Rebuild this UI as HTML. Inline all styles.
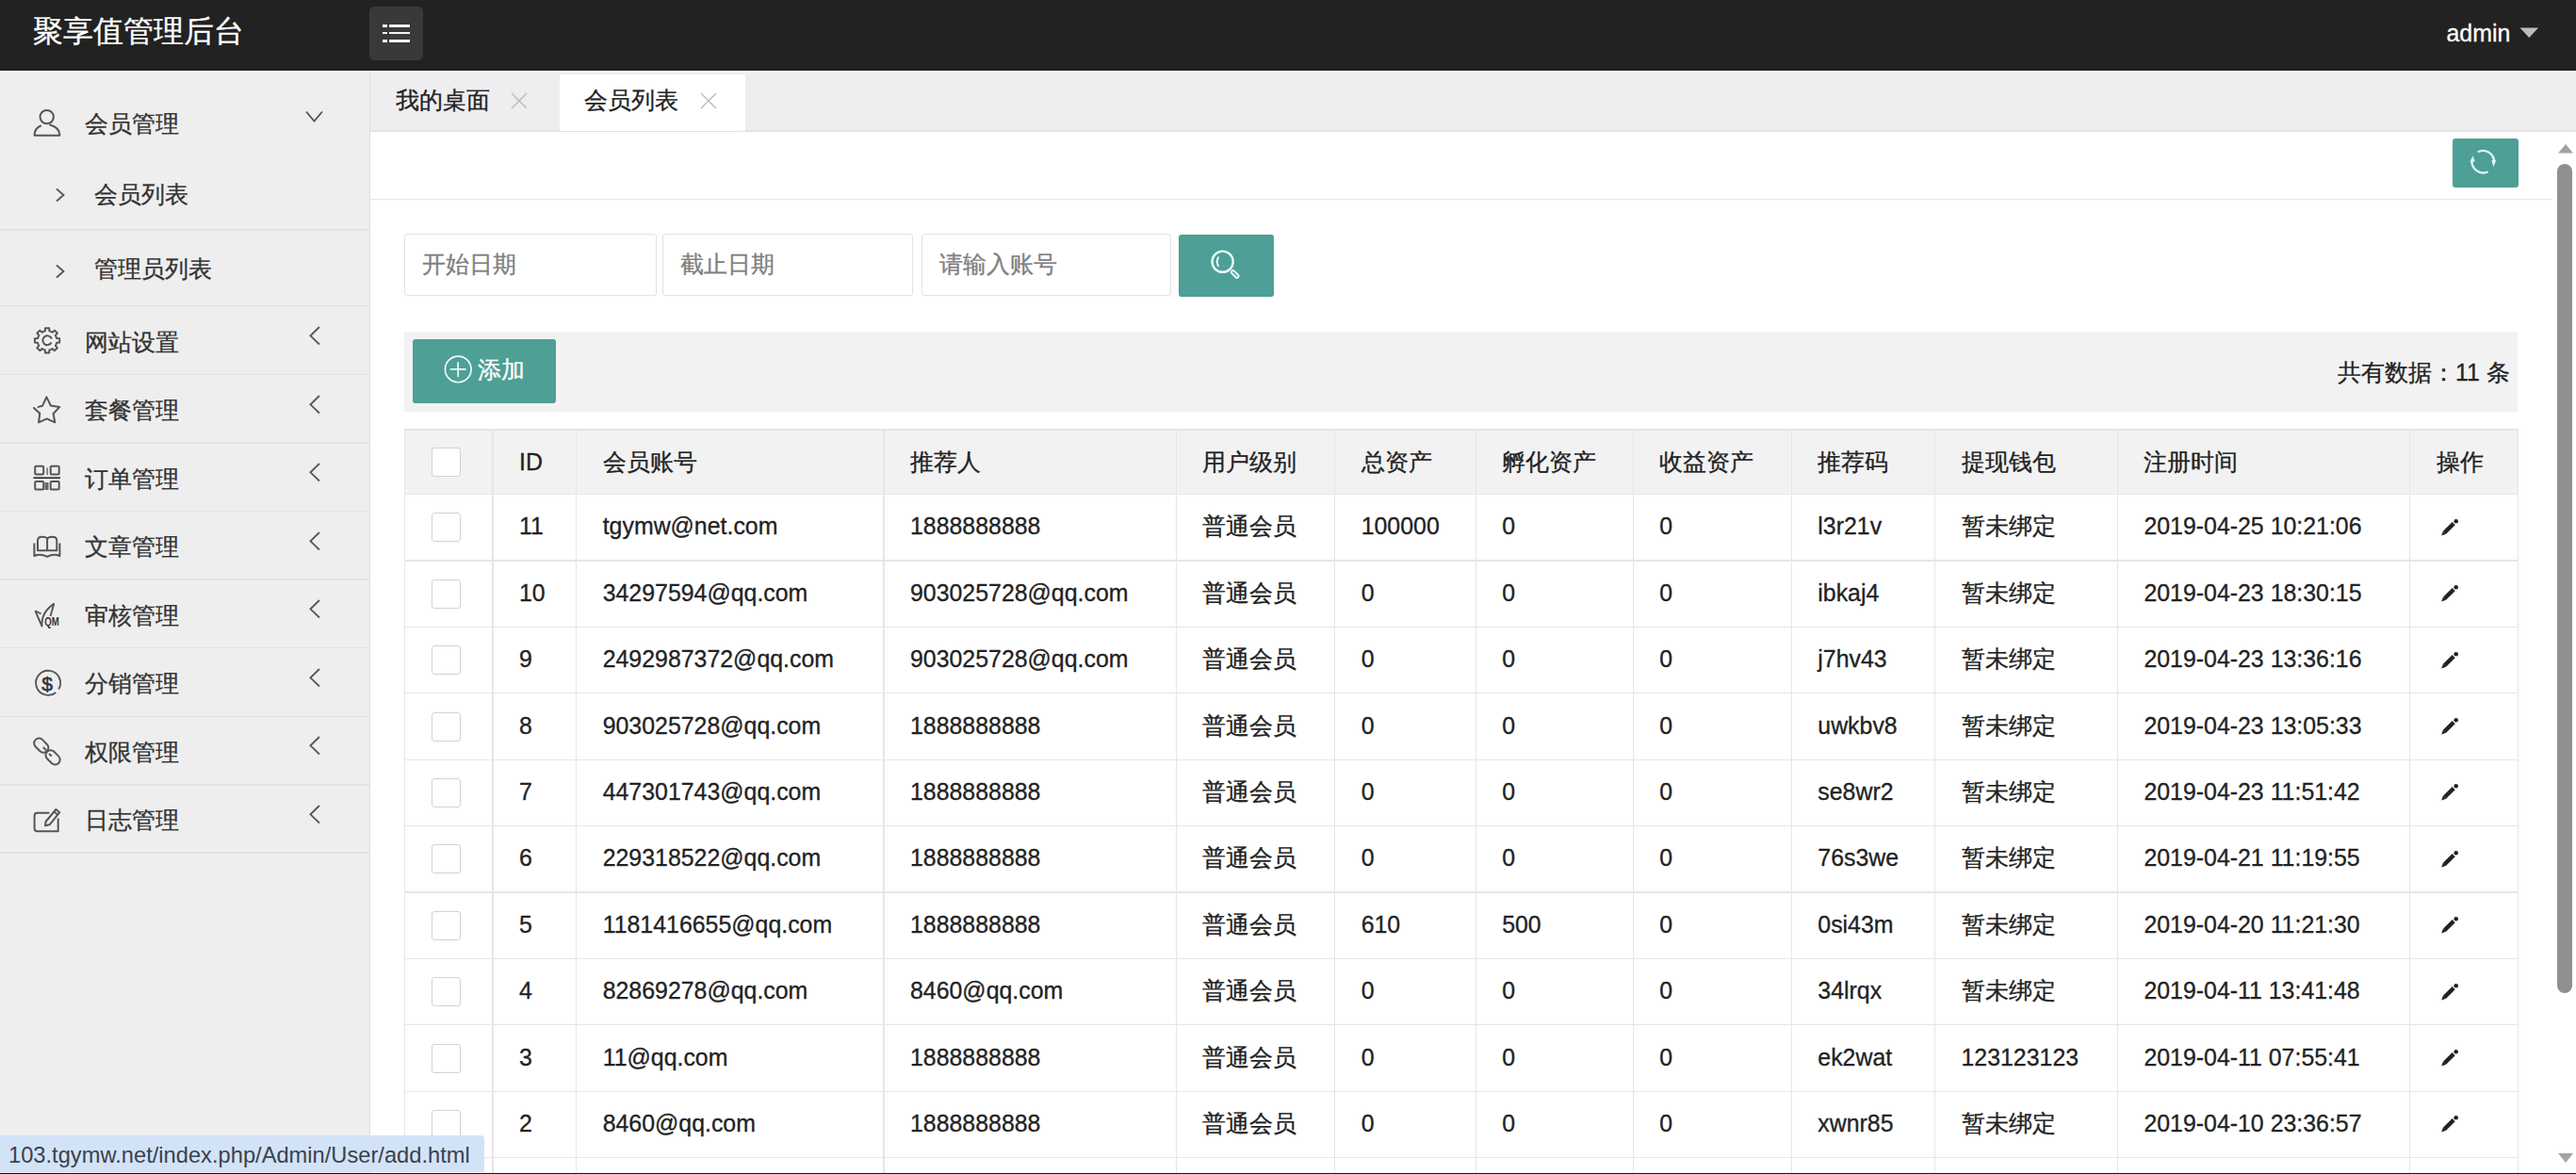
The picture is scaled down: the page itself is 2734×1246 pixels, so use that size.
<!DOCTYPE html>
<html><head><meta charset="utf-8">
<style>
*{margin:0;padding:0;box-sizing:border-box}
html,body{width:2734px;height:1246px;overflow:hidden;background:#fff;
 font-family:"Liberation Sans",sans-serif;font-size:24.9px;color:#333}
.a{position:absolute;white-space:nowrap}
.ln{position:absolute;background:#e6e6e6}
.tx{position:absolute;white-space:nowrap;line-height:30px;height:30px;-webkit-text-stroke:0.3px currentColor}
</style></head><body>

<div class="a" style="left:0;top:0;width:2734px;height:75px;background:#222"></div>
<div class="tx" style="left:35px;top:14.5px;font-size:31.7px;line-height:36px;height:36px;color:#fff">聚享值管理后台</div>
<div class="a" style="left:392px;top:7px;width:57px;height:57px;background:#393939;border-radius:5px"></div>
<div class="a" style="left:406px;top:26px;width:5px;height:3px;background:#f2f2f2"></div>
<div class="a" style="left:413px;top:26px;width:22px;height:3px;background:#f2f2f2"></div>
<div class="a" style="left:406px;top:34px;width:5px;height:2.2px;background:#f2f2f2"></div>
<div class="a" style="left:413px;top:34px;width:22px;height:2.2px;background:#f2f2f2"></div>
<div class="a" style="left:406px;top:41.5px;width:5px;height:3px;background:#f2f2f2"></div>
<div class="a" style="left:413px;top:41.5px;width:22px;height:3px;background:#f2f2f2"></div>
<div class="tx" style="left:2596.5px;top:19.5px;color:#fff;font-size:24.9px">admin</div>
<svg class="a" style="left:2674px;top:29px" width="21" height="12"><path d="M0.5 0.5 L20 0.5 L10.25 11 Z" fill="#bdbdbd"/></svg>
<div class="a" style="left:0;top:75px;width:392px;height:1171px;background:#eeeeee"></div>
<div class="a" style="left:392px;top:75px;width:1px;height:1171px;background:#e0e0e0"></div>
<div class="a" style="left:0;top:243.25px;width:392px;height:1.5px;background:#e2e2e2"></div>
<div class="a" style="left:0;top:323.55px;width:392px;height:1.5px;background:#e2e2e2"></div>
<div class="a" style="left:0;top:396.75px;width:392px;height:1.5px;background:#e2e2e2"></div>
<div class="a" style="left:0;top:469.25px;width:392px;height:1.5px;background:#e2e2e2"></div>
<div class="a" style="left:0;top:541.95px;width:392px;height:1.5px;background:#e2e2e2"></div>
<div class="a" style="left:0;top:614.25px;width:392px;height:1.5px;background:#e2e2e2"></div>
<div class="a" style="left:0;top:686.65px;width:392px;height:1.5px;background:#e2e2e2"></div>
<div class="a" style="left:0;top:759.75px;width:392px;height:1.5px;background:#e2e2e2"></div>
<div class="a" style="left:0;top:832.25px;width:392px;height:1.5px;background:#e2e2e2"></div>
<div class="a" style="left:0;top:904.45px;width:392px;height:1.5px;background:#e2e2e2"></div>
<div class="tx" style="left:90px;top:116px;color:#333">会员管理</div>
<svg class="a" style="left:28px;top:108px" width="50" height="44" viewBox="0 0 50 44"><g fill="none" stroke="#555" stroke-width="2"><circle cx="21.7" cy="16.1" r="7.2"/><path d="M15.8 25.3 Q8.6 28 8.6 35.8 H35.4 Q35.4 27 24.4 24.2" stroke-linejoin="round"/></g></svg>
<svg class="a" style="left:320px;top:112px" width="28" height="24" viewBox="0 0 28 24"><path d="M5 6.5 L13.5 16.5 L22 6.5" fill="none" stroke="#555" stroke-width="1.8"/></svg>
<div class="tx" style="left:100px;top:190.5px;color:#333">会员列表</div>
<div class="tx" style="left:100px;top:269.5px;color:#333">管理员列表</div>
<svg class="a" style="left:54px;top:196px" width="20" height="22" viewBox="0 0 20 22"><path d="M6 4.5 L13.5 11 L6 17.5" fill="none" stroke="#555" stroke-width="1.8"/></svg>
<svg class="a" style="left:54px;top:277px" width="20" height="22" viewBox="0 0 20 22"><path d="M6 4.5 L13.5 11 L6 17.5" fill="none" stroke="#555" stroke-width="1.8"/></svg>
<div class="tx" style="left:90px;top:347.5px;color:#333">网站设置</div>
<svg class="a" style="left:322px;top:343.0px" width="24" height="26" viewBox="0 0 24 26"><path d="M17 4 L7.5 13.3 L17 22.5" fill="none" stroke="#555" stroke-width="1.8"/></svg>
<div class="tx" style="left:90px;top:420.0px;color:#333">套餐管理</div>
<svg class="a" style="left:322px;top:415.5px" width="24" height="26" viewBox="0 0 24 26"><path d="M17 4 L7.5 13.3 L17 22.5" fill="none" stroke="#555" stroke-width="1.8"/></svg>
<div class="tx" style="left:90px;top:492.5px;color:#333">订单管理</div>
<svg class="a" style="left:322px;top:488.0px" width="24" height="26" viewBox="0 0 24 26"><path d="M17 4 L7.5 13.3 L17 22.5" fill="none" stroke="#555" stroke-width="1.8"/></svg>
<div class="tx" style="left:90px;top:565.0px;color:#333">文章管理</div>
<svg class="a" style="left:322px;top:560.5px" width="24" height="26" viewBox="0 0 24 26"><path d="M17 4 L7.5 13.3 L17 22.5" fill="none" stroke="#555" stroke-width="1.8"/></svg>
<div class="tx" style="left:90px;top:637.5px;color:#333">审核管理</div>
<svg class="a" style="left:322px;top:633.0px" width="24" height="26" viewBox="0 0 24 26"><path d="M17 4 L7.5 13.3 L17 22.5" fill="none" stroke="#555" stroke-width="1.8"/></svg>
<div class="tx" style="left:90px;top:710.0px;color:#333">分销管理</div>
<svg class="a" style="left:322px;top:705.5px" width="24" height="26" viewBox="0 0 24 26"><path d="M17 4 L7.5 13.3 L17 22.5" fill="none" stroke="#555" stroke-width="1.8"/></svg>
<div class="tx" style="left:90px;top:782.5px;color:#333">权限管理</div>
<svg class="a" style="left:322px;top:778.0px" width="24" height="26" viewBox="0 0 24 26"><path d="M17 4 L7.5 13.3 L17 22.5" fill="none" stroke="#555" stroke-width="1.8"/></svg>
<div class="tx" style="left:90px;top:855.0px;color:#333">日志管理</div>
<svg class="a" style="left:322px;top:850.5px" width="24" height="26" viewBox="0 0 24 26"><path d="M17 4 L7.5 13.3 L17 22.5" fill="none" stroke="#555" stroke-width="1.8"/></svg>
<svg class="a" style="left:28px;top:340px" width="50" height="44" viewBox="0 0 50 44"><g fill="none" stroke="#555" stroke-width="2" stroke-linejoin="round"><path d="M26.04 11.88 L24.42 11.36 L24.18 8.26 L20.02 8.26 L19.78 11.36 L18.16 11.88 L16.64 12.67 L14.28 10.64 L11.34 13.58 L13.37 15.94 L12.58 17.46 L12.06 19.08 L8.96 19.32 L8.96 23.48 L12.06 23.72 L12.58 25.34 L13.37 26.86 L11.34 29.22 L14.28 32.16 L16.64 30.13 L18.16 30.92 L19.78 31.44 L20.02 34.54 L24.18 34.54 L24.42 31.44 L26.04 30.92 L27.56 30.13 L29.92 32.16 L32.86 29.22 L30.83 26.86 L31.62 25.34 L32.14 23.72 L35.24 23.48 L35.24 19.32 L32.14 19.08 L31.62 17.46 L30.83 15.94 L32.86 13.58 L29.92 10.64 L27.56 12.67 Z"/><path d="M26.6 23.6 A4.9 4.9 0 1 1 26.9 19.6"/></g></svg>
<svg class="a" style="left:28px;top:412px" width="50" height="44" viewBox="0 0 50 44"><path d="M12.5 19.9 L17 18.8 L21.4 9.4 L25.9 18.6 L35.3 19.9 L28.6 27 L30.3 36.3 L21.7 32.4 L13 36.3 L14.3 26.8 L8 21" fill="none" stroke="#555" stroke-width="2" stroke-linejoin="round" stroke-linecap="round"/></svg>
<svg class="a" style="left:28px;top:484px" width="50" height="44" viewBox="0 0 50 44"><g fill="none" stroke="#555" stroke-width="2"><rect x="9.2" y="10.7" width="9" height="8.8" rx="1"/><rect x="25.7" y="10.7" width="9" height="8.8" rx="1"/><rect x="9.2" y="26.9" width="9" height="8.6" rx="1"/><rect x="25.7" y="26.9" width="9" height="8.6" rx="1"/></g><rect x="7.5" y="22.3" width="28.5" height="1.8" fill="#333"/><rect x="21.3" y="12.4" width="1.6" height="7.8" fill="#777"/><rect x="19.5" y="28" width="4" height="8" fill="#666"/></svg>
<svg class="a" style="left:28px;top:558px" width="50" height="44" viewBox="0 0 50 44"><g fill="none" stroke="#555" stroke-width="2" stroke-linejoin="round"><path d="M8.4 18.4 V32 Q15 29 22.1 32.8 Q29 29 35.4 32 V18.4"/><path d="M12 26.2 V16 Q12 11.8 16.5 11.8 Q21.5 11.8 22.1 14 Q23 11.8 27.5 11.8 Q32.3 11.8 32.3 16 V26.2 Z M22.1 13.5 V27"/></g></svg>
<svg class="a" style="left:28px;top:630px" width="50" height="44" viewBox="0 0 50 44"><g fill="none" stroke="#555" stroke-width="1.9" stroke-linejoin="round"><path d="M9.4 18.4 L16.5 34.6 Q15.5 20 29.2 10.9 L25.5 24"/><path d="M9.4 18.4 L15.6 21.5"/></g><text x="19.2" y="33.8" font-family="Liberation Sans" font-weight="bold" font-size="12" fill="#333" textLength="15.5" lengthAdjust="spacingAndGlyphs">QM</text></svg>
<svg class="a" style="left:28px;top:702px" width="50" height="44" viewBox="0 0 50 44"><g fill="none" stroke="#555" stroke-width="1.9"><path d="M31.3 32.9 A13 13 0 1 1 34.2 29.6"/></g><text x="22.1" y="30.6" text-anchor="middle" font-family="Liberation Sans" font-size="21" fill="#333" stroke="#333" stroke-width="0.6">$</text></svg>
<svg class="a" style="left:28px;top:775px" width="50" height="44" viewBox="0 0 50 44"><g fill="none" stroke="#555" stroke-width="2"><rect x="-5.2" y="-8.6" width="10.4" height="17.2" rx="5.2" transform="translate(15.8 16.2) rotate(-45)"/><rect x="-5.2" y="-8.6" width="10.4" height="17.2" rx="5.2" transform="translate(28.1 28.9) rotate(-45)"/><path d="M17.8 18 L21 21.2 M24 25 L26.8 27.6"/></g></svg>
<svg class="a" style="left:28px;top:848px" width="50" height="44" viewBox="0 0 50 44"><g fill="none" stroke="#555" stroke-width="2" stroke-linejoin="round"><path d="M24.4 14.8 H11.6 Q8.6 14.8 8.6 17.8 V31.3 Q8.6 34.3 11.6 34.3 H33.7 V20.6"/><path d="M20 28.3 L20.6 24 L31.4 11 L35.3 14.2 L24.6 27.3 Z M29.5 13.5 L33.3 16.7"/></g></svg>
<div class="a" style="left:393px;top:75px;width:2341px;height:65px;background:#eeeef0"></div>
<div class="a" style="left:0;top:75px;width:2734px;height:2px;background:#fff"></div>
<div class="a" style="left:393px;top:138px;width:2341px;height:2px;background:#e2e2e2"></div>
<div class="a" style="left:594px;top:78.5px;width:197px;height:60px;background:#fff"></div>
<div class="tx" style="left:420px;top:91px;color:#222">我的桌面</div>
<div class="tx" style="left:620px;top:91px;color:#222">会员列表</div>
<svg class="a" style="left:542px;top:98px" width="18" height="18"><path d="M1 1 L17 17 M17 1 L1 17" stroke="#bdbdbd" stroke-width="1.5"/></svg>
<svg class="a" style="left:742.5px;top:98px" width="18" height="18"><path d="M1 1 L17 17 M17 1 L1 17" stroke="#bdbdbd" stroke-width="1.5"/></svg>
<div class="a" style="left:393px;top:140px;width:2319px;height:1106px;background:#fff"></div>
<div class="a" style="left:2603px;top:147px;width:70px;height:52px;background:#4e9f96;border-radius:3px"></div>
<div class="ln" style="left:393px;top:210.5px;width:2316px;height:1.5px"></div>
<div class="a" style="left:429.4px;top:248px;width:267.20000000000005px;height:66px;border:1.6px solid #e2e2e2;border-radius:3px;background:#fff"></div>
<div class="tx" style="left:448.4px;top:265px;color:#808080">开始日期</div>
<div class="a" style="left:703px;top:248px;width:266.29999999999995px;height:66px;border:1.6px solid #e2e2e2;border-radius:3px;background:#fff"></div>
<div class="tx" style="left:722px;top:265px;color:#808080">截止日期</div>
<div class="a" style="left:978px;top:248px;width:265px;height:66px;border:1.6px solid #e2e2e2;border-radius:3px;background:#fff"></div>
<div class="tx" style="left:997px;top:265px;color:#808080">请输入账号</div>
<div class="a" style="left:1251px;top:249px;width:101px;height:66px;background:#4e9f96;border-radius:3px"></div>
<div class="a" style="left:429px;top:352px;width:2243px;height:84.6px;background:#f2f2f2"></div>
<div class="a" style="left:437.8px;top:360.4px;width:152px;height:67.6px;background:#4e9f96;border-radius:3px"></div>
<div class="tx" style="left:507px;top:377px;color:#fff">添加</div>
<div class="tx" style="left:2481px;top:380px;color:#222">共有数据：11 条</div>
<div class="a" style="left:429.3px;top:456px;width:2243.0px;height:68.60000000000002px;background:#f2f2f2"></div>
<div class="ln" style="left:429.3px;top:455px;width:2243.0px;height:1.5px"></div>
<div class="ln" style="left:429.3px;top:523.95px;width:2243.0px;height:1.3px"></div>
<div class="ln" style="left:429.3px;top:594.35px;width:2243.0px;height:1.3px"></div>
<div class="ln" style="left:429.3px;top:664.75px;width:2243.0px;height:1.3px"></div>
<div class="ln" style="left:429.3px;top:735.15px;width:2243.0px;height:1.3px"></div>
<div class="ln" style="left:429.3px;top:805.55px;width:2243.0px;height:1.3px"></div>
<div class="ln" style="left:429.3px;top:875.95px;width:2243.0px;height:1.3px"></div>
<div class="ln" style="left:429.3px;top:946.35px;width:2243.0px;height:1.3px"></div>
<div class="ln" style="left:429.3px;top:1016.75px;width:2243.0px;height:1.3px"></div>
<div class="ln" style="left:429.3px;top:1087.15px;width:2243.0px;height:1.3px"></div>
<div class="ln" style="left:429.3px;top:1157.55px;width:2243.0px;height:1.3px"></div>
<div class="ln" style="left:429.3px;top:1227.95px;width:2243.0px;height:1.3px"></div>
<div class="ln" style="left:428.65px;top:455px;width:1.3px;height:790px"></div>
<div class="ln" style="left:522.35px;top:455px;width:1.3px;height:790px"></div>
<div class="ln" style="left:611.05px;top:455px;width:1.3px;height:790px"></div>
<div class="ln" style="left:937.35px;top:455px;width:1.3px;height:790px"></div>
<div class="ln" style="left:1247.75px;top:455px;width:1.3px;height:790px"></div>
<div class="ln" style="left:1416.05px;top:455px;width:1.3px;height:790px"></div>
<div class="ln" style="left:1565.55px;top:455px;width:1.3px;height:790px"></div>
<div class="ln" style="left:1732.55px;top:455px;width:1.3px;height:790px"></div>
<div class="ln" style="left:1900.65px;top:455px;width:1.3px;height:790px"></div>
<div class="ln" style="left:2052.85px;top:455px;width:1.3px;height:790px"></div>
<div class="ln" style="left:2246.75px;top:455px;width:1.3px;height:790px"></div>
<div class="ln" style="left:2557.05px;top:455px;width:1.3px;height:790px"></div>
<div class="ln" style="left:2671.65px;top:455px;width:1.3px;height:790px"></div>
<div class="a" style="left:457.5px;top:474.8px;width:31px;height:31px;border:1.5px solid #d2d2d2;border-radius:3px;background:#fff"></div>
<div class="tx" style="left:551.0px;top:475.3px;color:#222">ID</div>
<div class="tx" style="left:639.7px;top:475.3px;color:#222">会员账号</div>
<div class="tx" style="left:966.0px;top:475.3px;color:#222">推荐人</div>
<div class="tx" style="left:1276.4px;top:475.3px;color:#222">用户级别</div>
<div class="tx" style="left:1444.7px;top:475.3px;color:#222">总资产</div>
<div class="tx" style="left:1594.2px;top:475.3px;color:#222">孵化资产</div>
<div class="tx" style="left:1761.2px;top:475.3px;color:#222">收益资产</div>
<div class="tx" style="left:1929.3px;top:475.3px;color:#222">推荐码</div>
<div class="tx" style="left:2081.5px;top:475.3px;color:#222">提现钱包</div>
<div class="tx" style="left:2275.4px;top:475.3px;color:#222">注册时间</div>
<div class="tx" style="left:2585.7px;top:475.3px;color:#222">操作</div>
<div class="a" style="left:457.5px;top:544.3px;width:31px;height:31px;border:1.5px solid #d2d2d2;border-radius:3px;background:#fff"></div>
<div class="tx" style="left:551.0px;top:543.3px;color:#222">11</div>
<div class="tx" style="left:639.7px;top:543.3px;color:#222">tgymw@net.com</div>
<div class="tx" style="left:966.0px;top:543.3px;color:#222">1888888888</div>
<div class="tx" style="left:1276.4px;top:543.3px;color:#222">普通会员</div>
<div class="tx" style="left:1444.7px;top:543.3px;color:#222">100000</div>
<div class="tx" style="left:1594.2px;top:543.3px;color:#222">0</div>
<div class="tx" style="left:1761.2px;top:543.3px;color:#222">0</div>
<div class="tx" style="left:1929.3px;top:543.3px;color:#222">l3r21v</div>
<div class="tx" style="left:2081.5px;top:543.3px;color:#222">暂未绑定</div>
<div class="tx" style="left:2275.4px;top:543.3px;color:#222">2019-04-25 10:21:06</div>
<svg class="a" style="left:2590px;top:549.8px" width="20" height="20"><path d="M4.6 15.1 L14.2 5.6" stroke="#222" stroke-width="4.3"/><path d="M3 13.5 L6.2 16.7 L1.2 18.4 Z" fill="#222"/><circle cx="16.7" cy="3.3" r="2.3" fill="#222"/></svg>
<div class="a" style="left:457.5px;top:614.7px;width:31px;height:31px;border:1.5px solid #d2d2d2;border-radius:3px;background:#fff"></div>
<div class="tx" style="left:551.0px;top:613.7px;color:#222">10</div>
<div class="tx" style="left:639.7px;top:613.7px;color:#222">34297594@qq.com</div>
<div class="tx" style="left:966.0px;top:613.7px;color:#222">903025728@qq.com</div>
<div class="tx" style="left:1276.4px;top:613.7px;color:#222">普通会员</div>
<div class="tx" style="left:1444.7px;top:613.7px;color:#222">0</div>
<div class="tx" style="left:1594.2px;top:613.7px;color:#222">0</div>
<div class="tx" style="left:1761.2px;top:613.7px;color:#222">0</div>
<div class="tx" style="left:1929.3px;top:613.7px;color:#222">ibkaj4</div>
<div class="tx" style="left:2081.5px;top:613.7px;color:#222">暂未绑定</div>
<div class="tx" style="left:2275.4px;top:613.7px;color:#222">2019-04-23 18:30:15</div>
<svg class="a" style="left:2590px;top:620.2px" width="20" height="20"><path d="M4.6 15.1 L14.2 5.6" stroke="#222" stroke-width="4.3"/><path d="M3 13.5 L6.2 16.7 L1.2 18.4 Z" fill="#222"/><circle cx="16.7" cy="3.3" r="2.3" fill="#222"/></svg>
<div class="a" style="left:457.5px;top:685.1px;width:31px;height:31px;border:1.5px solid #d2d2d2;border-radius:3px;background:#fff"></div>
<div class="tx" style="left:551.0px;top:684.1px;color:#222">9</div>
<div class="tx" style="left:639.7px;top:684.1px;color:#222">2492987372@qq.com</div>
<div class="tx" style="left:966.0px;top:684.1px;color:#222">903025728@qq.com</div>
<div class="tx" style="left:1276.4px;top:684.1px;color:#222">普通会员</div>
<div class="tx" style="left:1444.7px;top:684.1px;color:#222">0</div>
<div class="tx" style="left:1594.2px;top:684.1px;color:#222">0</div>
<div class="tx" style="left:1761.2px;top:684.1px;color:#222">0</div>
<div class="tx" style="left:1929.3px;top:684.1px;color:#222">j7hv43</div>
<div class="tx" style="left:2081.5px;top:684.1px;color:#222">暂未绑定</div>
<div class="tx" style="left:2275.4px;top:684.1px;color:#222">2019-04-23 13:36:16</div>
<svg class="a" style="left:2590px;top:690.6px" width="20" height="20"><path d="M4.6 15.1 L14.2 5.6" stroke="#222" stroke-width="4.3"/><path d="M3 13.5 L6.2 16.7 L1.2 18.4 Z" fill="#222"/><circle cx="16.7" cy="3.3" r="2.3" fill="#222"/></svg>
<div class="a" style="left:457.5px;top:755.5px;width:31px;height:31px;border:1.5px solid #d2d2d2;border-radius:3px;background:#fff"></div>
<div class="tx" style="left:551.0px;top:754.5px;color:#222">8</div>
<div class="tx" style="left:639.7px;top:754.5px;color:#222">903025728@qq.com</div>
<div class="tx" style="left:966.0px;top:754.5px;color:#222">1888888888</div>
<div class="tx" style="left:1276.4px;top:754.5px;color:#222">普通会员</div>
<div class="tx" style="left:1444.7px;top:754.5px;color:#222">0</div>
<div class="tx" style="left:1594.2px;top:754.5px;color:#222">0</div>
<div class="tx" style="left:1761.2px;top:754.5px;color:#222">0</div>
<div class="tx" style="left:1929.3px;top:754.5px;color:#222">uwkbv8</div>
<div class="tx" style="left:2081.5px;top:754.5px;color:#222">暂未绑定</div>
<div class="tx" style="left:2275.4px;top:754.5px;color:#222">2019-04-23 13:05:33</div>
<svg class="a" style="left:2590px;top:761.0px" width="20" height="20"><path d="M4.6 15.1 L14.2 5.6" stroke="#222" stroke-width="4.3"/><path d="M3 13.5 L6.2 16.7 L1.2 18.4 Z" fill="#222"/><circle cx="16.7" cy="3.3" r="2.3" fill="#222"/></svg>
<div class="a" style="left:457.5px;top:825.9px;width:31px;height:31px;border:1.5px solid #d2d2d2;border-radius:3px;background:#fff"></div>
<div class="tx" style="left:551.0px;top:824.9px;color:#222">7</div>
<div class="tx" style="left:639.7px;top:824.9px;color:#222">447301743@qq.com</div>
<div class="tx" style="left:966.0px;top:824.9px;color:#222">1888888888</div>
<div class="tx" style="left:1276.4px;top:824.9px;color:#222">普通会员</div>
<div class="tx" style="left:1444.7px;top:824.9px;color:#222">0</div>
<div class="tx" style="left:1594.2px;top:824.9px;color:#222">0</div>
<div class="tx" style="left:1761.2px;top:824.9px;color:#222">0</div>
<div class="tx" style="left:1929.3px;top:824.9px;color:#222">se8wr2</div>
<div class="tx" style="left:2081.5px;top:824.9px;color:#222">暂未绑定</div>
<div class="tx" style="left:2275.4px;top:824.9px;color:#222">2019-04-23 11:51:42</div>
<svg class="a" style="left:2590px;top:831.4px" width="20" height="20"><path d="M4.6 15.1 L14.2 5.6" stroke="#222" stroke-width="4.3"/><path d="M3 13.5 L6.2 16.7 L1.2 18.4 Z" fill="#222"/><circle cx="16.7" cy="3.3" r="2.3" fill="#222"/></svg>
<div class="a" style="left:457.5px;top:896.3px;width:31px;height:31px;border:1.5px solid #d2d2d2;border-radius:3px;background:#fff"></div>
<div class="tx" style="left:551.0px;top:895.3px;color:#222">6</div>
<div class="tx" style="left:639.7px;top:895.3px;color:#222">229318522@qq.com</div>
<div class="tx" style="left:966.0px;top:895.3px;color:#222">1888888888</div>
<div class="tx" style="left:1276.4px;top:895.3px;color:#222">普通会员</div>
<div class="tx" style="left:1444.7px;top:895.3px;color:#222">0</div>
<div class="tx" style="left:1594.2px;top:895.3px;color:#222">0</div>
<div class="tx" style="left:1761.2px;top:895.3px;color:#222">0</div>
<div class="tx" style="left:1929.3px;top:895.3px;color:#222">76s3we</div>
<div class="tx" style="left:2081.5px;top:895.3px;color:#222">暂未绑定</div>
<div class="tx" style="left:2275.4px;top:895.3px;color:#222">2019-04-21 11:19:55</div>
<svg class="a" style="left:2590px;top:901.8px" width="20" height="20"><path d="M4.6 15.1 L14.2 5.6" stroke="#222" stroke-width="4.3"/><path d="M3 13.5 L6.2 16.7 L1.2 18.4 Z" fill="#222"/><circle cx="16.7" cy="3.3" r="2.3" fill="#222"/></svg>
<div class="a" style="left:457.5px;top:966.7px;width:31px;height:31px;border:1.5px solid #d2d2d2;border-radius:3px;background:#fff"></div>
<div class="tx" style="left:551.0px;top:965.7px;color:#222">5</div>
<div class="tx" style="left:639.7px;top:965.7px;color:#222">1181416655@qq.com</div>
<div class="tx" style="left:966.0px;top:965.7px;color:#222">1888888888</div>
<div class="tx" style="left:1276.4px;top:965.7px;color:#222">普通会员</div>
<div class="tx" style="left:1444.7px;top:965.7px;color:#222">610</div>
<div class="tx" style="left:1594.2px;top:965.7px;color:#222">500</div>
<div class="tx" style="left:1761.2px;top:965.7px;color:#222">0</div>
<div class="tx" style="left:1929.3px;top:965.7px;color:#222">0si43m</div>
<div class="tx" style="left:2081.5px;top:965.7px;color:#222">暂未绑定</div>
<div class="tx" style="left:2275.4px;top:965.7px;color:#222">2019-04-20 11:21:30</div>
<svg class="a" style="left:2590px;top:972.2px" width="20" height="20"><path d="M4.6 15.1 L14.2 5.6" stroke="#222" stroke-width="4.3"/><path d="M3 13.5 L6.2 16.7 L1.2 18.4 Z" fill="#222"/><circle cx="16.7" cy="3.3" r="2.3" fill="#222"/></svg>
<div class="a" style="left:457.5px;top:1037.1px;width:31px;height:31px;border:1.5px solid #d2d2d2;border-radius:3px;background:#fff"></div>
<div class="tx" style="left:551.0px;top:1036.1px;color:#222">4</div>
<div class="tx" style="left:639.7px;top:1036.1px;color:#222">82869278@qq.com</div>
<div class="tx" style="left:966.0px;top:1036.1px;color:#222">8460@qq.com</div>
<div class="tx" style="left:1276.4px;top:1036.1px;color:#222">普通会员</div>
<div class="tx" style="left:1444.7px;top:1036.1px;color:#222">0</div>
<div class="tx" style="left:1594.2px;top:1036.1px;color:#222">0</div>
<div class="tx" style="left:1761.2px;top:1036.1px;color:#222">0</div>
<div class="tx" style="left:1929.3px;top:1036.1px;color:#222">34lrqx</div>
<div class="tx" style="left:2081.5px;top:1036.1px;color:#222">暂未绑定</div>
<div class="tx" style="left:2275.4px;top:1036.1px;color:#222">2019-04-11 13:41:48</div>
<svg class="a" style="left:2590px;top:1042.6px" width="20" height="20"><path d="M4.6 15.1 L14.2 5.6" stroke="#222" stroke-width="4.3"/><path d="M3 13.5 L6.2 16.7 L1.2 18.4 Z" fill="#222"/><circle cx="16.7" cy="3.3" r="2.3" fill="#222"/></svg>
<div class="a" style="left:457.5px;top:1107.5px;width:31px;height:31px;border:1.5px solid #d2d2d2;border-radius:3px;background:#fff"></div>
<div class="tx" style="left:551.0px;top:1106.5px;color:#222">3</div>
<div class="tx" style="left:639.7px;top:1106.5px;color:#222">11@qq.com</div>
<div class="tx" style="left:966.0px;top:1106.5px;color:#222">1888888888</div>
<div class="tx" style="left:1276.4px;top:1106.5px;color:#222">普通会员</div>
<div class="tx" style="left:1444.7px;top:1106.5px;color:#222">0</div>
<div class="tx" style="left:1594.2px;top:1106.5px;color:#222">0</div>
<div class="tx" style="left:1761.2px;top:1106.5px;color:#222">0</div>
<div class="tx" style="left:1929.3px;top:1106.5px;color:#222">ek2wat</div>
<div class="tx" style="left:2081.5px;top:1106.5px;color:#222">123123123</div>
<div class="tx" style="left:2275.4px;top:1106.5px;color:#222">2019-04-11 07:55:41</div>
<svg class="a" style="left:2590px;top:1113.0px" width="20" height="20"><path d="M4.6 15.1 L14.2 5.6" stroke="#222" stroke-width="4.3"/><path d="M3 13.5 L6.2 16.7 L1.2 18.4 Z" fill="#222"/><circle cx="16.7" cy="3.3" r="2.3" fill="#222"/></svg>
<div class="a" style="left:457.5px;top:1177.9px;width:31px;height:31px;border:1.5px solid #d2d2d2;border-radius:3px;background:#fff"></div>
<div class="tx" style="left:551.0px;top:1176.9px;color:#222">2</div>
<div class="tx" style="left:639.7px;top:1176.9px;color:#222">8460@qq.com</div>
<div class="tx" style="left:966.0px;top:1176.9px;color:#222">1888888888</div>
<div class="tx" style="left:1276.4px;top:1176.9px;color:#222">普通会员</div>
<div class="tx" style="left:1444.7px;top:1176.9px;color:#222">0</div>
<div class="tx" style="left:1594.2px;top:1176.9px;color:#222">0</div>
<div class="tx" style="left:1761.2px;top:1176.9px;color:#222">0</div>
<div class="tx" style="left:1929.3px;top:1176.9px;color:#222">xwnr85</div>
<div class="tx" style="left:2081.5px;top:1176.9px;color:#222">暂未绑定</div>
<div class="tx" style="left:2275.4px;top:1176.9px;color:#222">2019-04-10 23:36:57</div>
<svg class="a" style="left:2590px;top:1183.4px" width="20" height="20"><path d="M4.6 15.1 L14.2 5.6" stroke="#222" stroke-width="4.3"/><path d="M3 13.5 L6.2 16.7 L1.2 18.4 Z" fill="#222"/><circle cx="16.7" cy="3.3" r="2.3" fill="#222"/></svg>
<div class="a" style="left:457.5px;top:1248.3px;width:31px;height:31px;border:1.5px solid #d2d2d2;border-radius:3px;background:#fff"></div>
<div class="tx" style="left:551.0px;top:1247.3px;color:#222">1</div>
<svg class="a" style="left:460px;top:365px" width="110" height="55" viewBox="0 0 110 55"><g fill="none" stroke="#e6fcf8" stroke-width="1.7"><circle cx="26.25" cy="26.95" r="13.8"/><path d="M17.8 26.9 H34.7 M26.2 19.2 V34.9"/></g></svg>
<svg class="a" style="left:1270px;top:255px" width="60" height="50" viewBox="0 0 60 50"><g fill="none" stroke="#e8fffb" stroke-linecap="round"><circle cx="27.6" cy="22.7" r="11.1" stroke-width="2.4"/><path d="M23 18.2 Q20.5 22.7 23 27.2" stroke-width="1.9"/><path d="M38.6 33.8 L42.8 38" stroke-width="5.4"/><path d="M38.6 33.8 L42.8 38" stroke="#4e9f96" stroke-width="1.6"/></g></svg>
<svg class="a" style="left:2610px;top:150px" width="60" height="46" viewBox="0 0 60 46"><g fill="none" stroke="#dcfbf5" stroke-width="2.3"><path d="M19.8 11.2 A11.9 11.9 0 0 1 37.1 21"/><path d="M30.6 32.2 A11.9 11.9 0 0 1 13.8 19.2"/></g><g fill="#dcfbf5"><path d="M34.3 20.2 L39.3 19.8 L36.5 27.2 Z"/><path d="M11.4 22.3 L16.9 21.3 L14.3 15.4 Z"/></g></svg>
<div class="a" style="left:2712px;top:140px;width:22px;height:1106px;background:#fff"></div>
<svg class="a" style="left:2712px;top:150px" width="22" height="14"><path d="M3 12.5 L11 3 L19 12.5 Z" fill="#a3a3a3"/></svg>
<div class="a" style="left:2714px;top:174px;width:15.6px;height:880px;background:#8f8f8f;border-radius:8px"></div>
<svg class="a" style="left:2712px;top:1222px" width="22" height="14"><path d="M3 2 L19 2 L11 12 Z" fill="#a3a3a3"/></svg>
<div class="a" style="left:0;top:1205.4px;width:514px;height:39px;background:#d3e3f7;border-top-right-radius:4px"></div>
<div class="tx" style="left:9px;top:1211px;color:#3a414c;font-size:23.7px;-webkit-text-stroke:0">103.tgymw.net/index.php/Admin/User/add.html</div>
<div class="a" style="left:0;top:1244.5px;width:2734px;height:1.5px;background:#111"></div>
</body></html>
